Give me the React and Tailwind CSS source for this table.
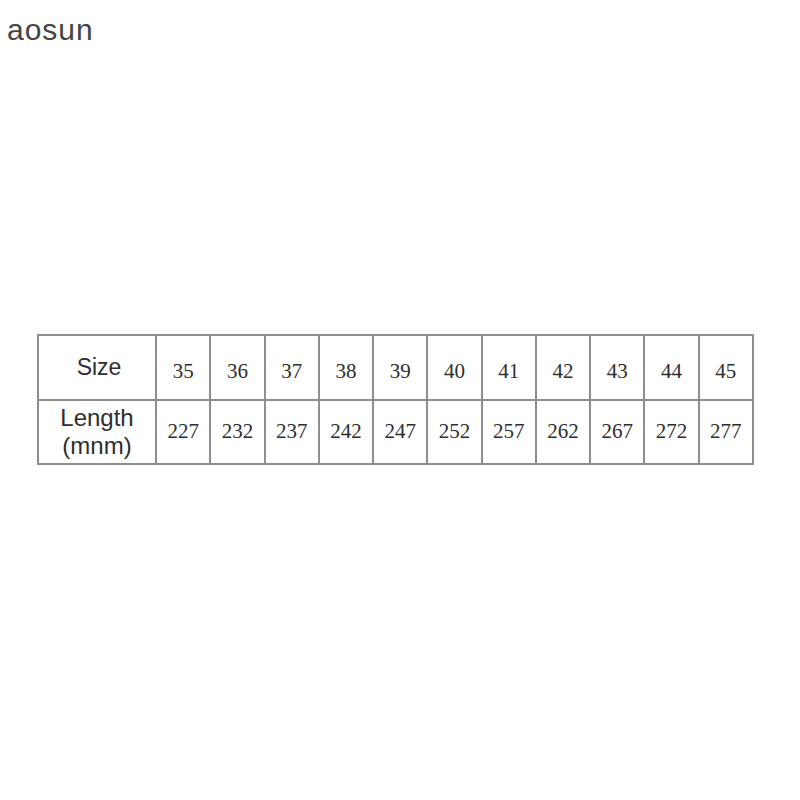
import React from "react";

const sizes = [35, 36, 37, 38, 39, 40, 41, 42, 43, 44, 45];
const lengths = [227, 232, 237, 242, 247, 252, 257, 262, 267, 272, 277];

export default function App() {
  return (
    <div className="w-[800px] h-[800px] bg-white relative overflow-hidden">
      <div
        className="pl-[7px] pt-[12px] text-[30px] leading-[36px] text-[#444444] tracking-[1px]"
        style={{ fontFamily: '"Liberation Sans", Arial, sans-serif' }}
      >
        aosun
      </div>
      <div className="pl-[37px] pt-[286px]">
        <table className="border-collapse table-fixed w-[717px]">
          <colgroup>
            <col className="w-[118px]" />
            {sizes.map((s) => (
              <col key={s} />
            ))}
          </colgroup>
          <tbody>
            <tr className="h-[65px]">
              <td
                className="border-2 border-[#8e8e8e] text-center align-middle text-[23px] text-[#2e2e2e] pl-[4px]"
                style={{ fontFamily: '"Liberation Sans", Arial, sans-serif' }}
              >
                Size
              </td>
              {sizes.map((s) => (
                <td
                  key={s}
                  className="border-2 border-[#8e8e8e] text-center align-middle text-[21px] text-[#2e2e2e] pt-[8px]"
                  style={{ fontFamily: '"Liberation Serif", "Times New Roman", serif' }}
                >
                  {s}
                </td>
              ))}
            </tr>
            <tr className="h-[64px]">
              <td
                className="border-2 border-[#8e8e8e] text-center align-middle text-[24px] leading-[28px] text-[#2e2e2e]"
                style={{ fontFamily: '"Liberation Sans", Arial, sans-serif' }}
              >
                Length
                <br />
                (mnm)
              </td>
              {lengths.map((l) => (
                <td
                  key={l}
                  className="border-2 border-[#8e8e8e] text-center align-middle text-[21px] text-[#2e2e2e]"
                  style={{ fontFamily: '"Liberation Serif", "Times New Roman", serif' }}
                >
                  {l}
                </td>
              ))}
            </tr>
          </tbody>
        </table>
      </div>
    </div>
  );
}
